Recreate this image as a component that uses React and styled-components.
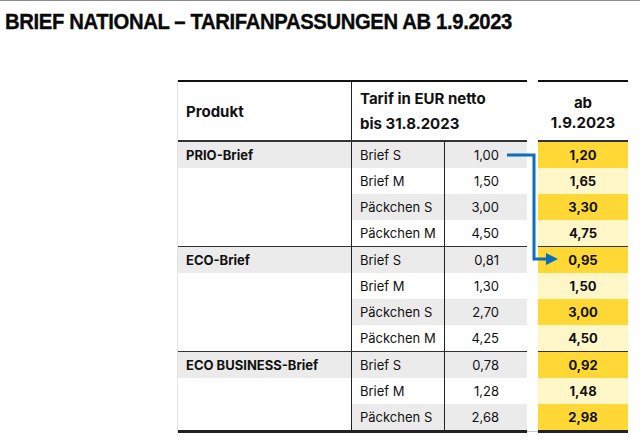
import React from "react";
import styled, { createGlobalStyle } from "styled-components";

const Global = createGlobalStyle`
  html, body { margin: 0; padding: 0; background: #fff; }
  body { font-family: Inter, "Liberation Sans", sans-serif; color: #111; }
`;

const Page = styled.div`
  width: 640px;
  height: 446px;
  overflow: hidden;
  border-top: 1px solid #8c8c8c;
  box-sizing: border-box;
`;

const Title = styled.h1`
  margin: 9px 0 0 5px;
  font-family: "Liberation Sans", Arial, sans-serif;
  font-weight: 700;
  font-size: 22.5px;
  line-height: 24px;
  letter-spacing: -0.4px;
  color: #0a0a0a;
  white-space: nowrap;
  transform: scaleX(0.9);
  transform-origin: left center;
  -webkit-text-stroke: 0.35px #0a0a0a;
`;

const Tables = styled.div`
  position: relative;
  margin-top: 46px;
  padding-left: 178px;
  display: flex;
  align-items: flex-start;
`;

const LeftTable = styled.div`
  width: 349px;
  border-top: 2px solid #111;
  border-bottom: 3px solid #222;
  box-shadow: -1px 0 0 #e4e4e4;
`;

const Gap = styled.div`
  width: 11px;
  align-self: stretch;
  display: flex;
  flex-direction: column;
  justify-content: flex-end;
  &::after {
    content: "";
    display: block;
    height: 1px;
    margin-bottom: 1px;
    background: #c8c8c8;
  }
`;

const RightTable = styled.div`
  width: 90px;
  border-top: 2px solid #111;
  border-bottom: 3px solid #222;
`;

const Head = styled.div`
  height: 58px;
  display: grid;
  grid-template-columns: ${(p) => p.$cols};
  border-bottom: 2px solid #333;
`;

const HeadCell = styled.div`
  display: flex;
  flex-direction: column;
  justify-content: center;
  align-items: ${(p) => (p.$center ? "center" : "flex-start")};
  padding: ${(p) => (p.$center ? "4px 0 0 0" : "0 0 0 8px")};
  font-weight: 700;
  font-size: 15px;
  line-height: ${(p) => (p.$center ? "20px" : "25px")};
  border-right: ${(p) => (p.$divider ? "1px solid #222" : "none")};
  text-align: center;
`;

const Group = styled.div`
  border-top: ${(p) => (p.$first ? "none" : "1px solid #333")};
`;

const Row = styled.div`
  height: 26px;
  display: grid;
  grid-template-columns: 174px 93px 82px;
`;

const Cell = styled.div`
  display: flex;
  align-items: center;
  font-size: 13px;
  font-weight: ${(p) => (p.$bold ? 700 : 400)};
  background: ${(p) => (p.$shade ? "#ebebeb" : "#fff")};
  justify-content: ${(p) => (p.$right ? "flex-end" : "flex-start")};
  padding: ${(p) => (p.$right ? "0 28px 0 0" : "0 0 0 8px")};
  border-right: ${(p) => (p.$divider ? "1px solid #222" : "none")};
  white-space: nowrap;
`;

const NewCell = styled.div`
  height: 26px;
  display: flex;
  align-items: center;
  justify-content: center;
  font-size: 13px;
  font-weight: 700;
  background: ${(p) => (p.$dark ? "#ffd836" : "#fff7c8")};
`;

const Arrow = styled.svg`
  position: absolute;
  left: 0;
  top: 0;
  pointer-events: none;
`;

const groups = [
  {
    name: "PRIO-Brief",
    rows: [
      ["Brief S", "1,00", "1,20"],
      ["Brief M", "1,50", "1,65"],
      ["Päckchen S", "3,00", "3,30"],
      ["Päckchen M", "4,50", "4,75"],
    ],
  },
  {
    name: "ECO-Brief",
    rows: [
      ["Brief S", "0,81", "0,95"],
      ["Brief M", "1,30", "1,50"],
      ["Päckchen S", "2,70", "3,00"],
      ["Päckchen M", "4,25", "4,50"],
    ],
  },
  {
    name: "ECO BUSINESS-Brief",
    rows: [
      ["Brief S", "0,78", "0,92"],
      ["Brief M", "1,28", "1,48"],
      ["Päckchen S", "2,68", "2,98"],
    ],
  },
];

export default function App() {
  return (
    <Page>
      <Global />
      <Title>BRIEF NATIONAL – TARIFANPASSUNGEN AB 1.9.2023</Title>
      <Tables>
        <LeftTable>
          <Head $cols="174px 175px">
            <HeadCell $divider>Produkt</HeadCell>
            <HeadCell>
              <span>Tarif in EUR netto</span>
              <span>bis 31.8.2023</span>
            </HeadCell>
          </Head>
          {groups.map((g, gi) => (
            <Group key={g.name} $first={gi === 0}>
              {g.rows.map((r, ri) => (
                <Row key={ri}>
                  <Cell $bold $shade={ri === 0} $divider>
                    {ri === 0 ? g.name : ""}
                  </Cell>
                  <Cell $shade={ri % 2 === 0} $divider>
                    {r[0]}
                  </Cell>
                  <Cell $shade={ri % 2 === 0} $right>
                    {r[1]}
                  </Cell>
                </Row>
              ))}
            </Group>
          ))}
        </LeftTable>
        <Gap />
        <RightTable>
          <Head $cols="90px">
            <HeadCell $center>
              <span>ab</span>
              <span>1.9.2023</span>
            </HeadCell>
          </Head>
          {groups.map((g, gi) => (
            <Group key={g.name} $first={gi === 0}>
              {g.rows.map((r, ri) => (
                <NewCell key={ri} $dark={ri % 2 === 0}>
                  {r[2]}
                </NewCell>
              ))}
            </Group>
          ))}
        </RightTable>
        <Arrow width="640" height="200" viewBox="0 80 640 200">
          <path
            d="M507 155 H534 V259 H548"
            fill="none"
            stroke="#0b6dbe"
            strokeWidth="3"
          />
          <path d="M546 253 L558 259 L546 265 Z" fill="#0b6dbe" />
        </Arrow>
      </Tables>
    </Page>
  );
}
